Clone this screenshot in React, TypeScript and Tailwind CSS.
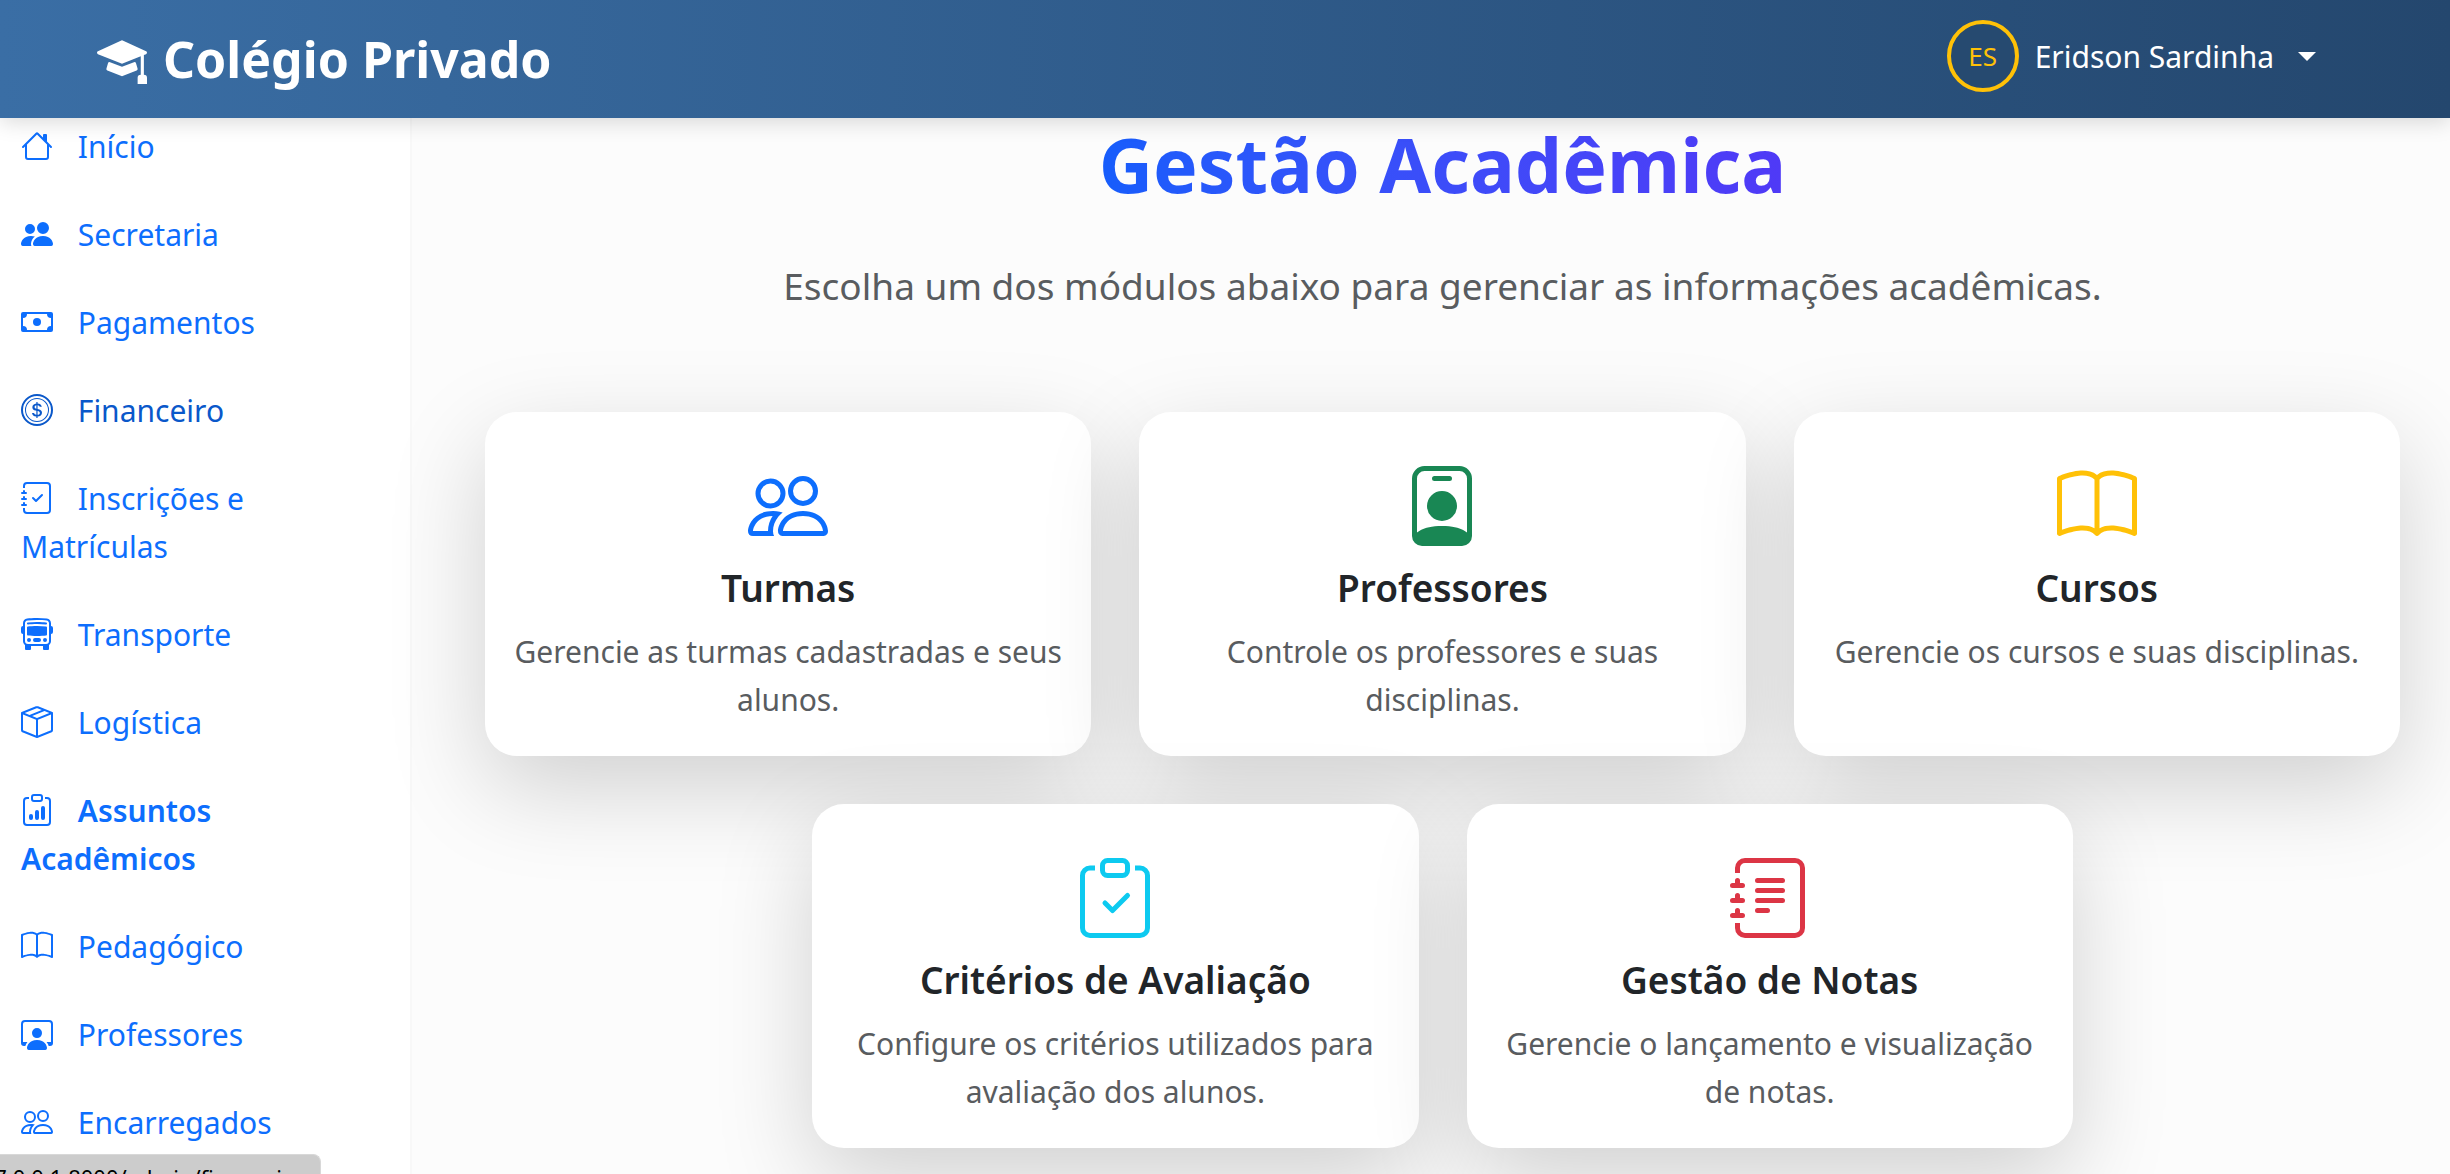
import React from "react";
import type { IconType } from "react-icons";
import {
  BsBook,
  BsBoxSeam,
  BsBusFront,
  BsCash,
  BsClipboardCheck,
  BsClipboardData,
  BsCoin,
  BsHouse,
  BsJournalCheck,
  BsJournalText,
  BsMortarboardFill,
  BsPeople,
  BsPeopleFill,
  BsPersonBadge,
  BsPersonWorkspace,
} from "react-icons/bs";

type MenuItem = { label: string; icon: IconType; className: string };
type Modulo = { title: string; text: string; icon: IconType; color: string };

const menu: MenuItem[] = [
  { label: "Início", icon: BsHouse, className: "text-[#0d6efd]" },
  { label: "Secretaria", icon: BsPeopleFill, className: "text-[#0d6efd]" },
  { label: "Pagamentos", icon: BsCash, className: "text-[#0d6efd]" },
  { label: "Financeiro", icon: BsCoin, className: "text-[#0a58ca]" },
  { label: "Inscrições e Matrículas", icon: BsJournalCheck, className: "text-[#0d6efd]" },
  { label: "Transporte", icon: BsBusFront, className: "text-[#0d6efd]" },
  { label: "Logística", icon: BsBoxSeam, className: "text-[#0d6efd]" },
  { label: "Assuntos Acadêmicos", icon: BsClipboardData, className: "text-[#0d6efd] font-semibold" },
  { label: "Pedagógico", icon: BsBook, className: "text-[#0d6efd]" },
  { label: "Professores", icon: BsPersonWorkspace, className: "text-[#0d6efd]" },
  { label: "Encarregados", icon: BsPeople, className: "text-[#0d6efd]" },
];

const modulos: Modulo[] = [
  { title: "Turmas", text: "Gerencie as turmas cadastradas e seus alunos.", icon: BsPeople, color: "text-[#0d6efd]" },
  { title: "Professores", text: "Controle os professores e suas disciplinas.", icon: BsPersonBadge, color: "text-[#198754]" },
  { title: "Cursos", text: "Gerencie os cursos e suas disciplinas.", icon: BsBook, color: "text-[#ffc107]" },
  {
    title: "Critérios de Avaliação",
    text: "Configure os critérios utilizados para avaliação dos alunos.",
    icon: BsClipboardCheck,
    color: "text-[#0dcaf0]",
  },
  {
    title: "Gestão de Notas",
    text: "Gerencie o lançamento e visualização de notas.",
    icon: BsJournalText,
    color: "text-[#dc3545]",
  },
];

function Header() {
  return (
    <header className="relative z-10 flex h-[118px] items-center justify-between bg-[linear-gradient(90deg,#3a6ea5,#24476e)] pr-[134px] pl-[97px] shadow-[0_4px_20px_rgba(0,0,0,0.15)]">
      <a href="#" className="flex items-center gap-4 text-[50px] font-bold text-white">
        <BsMortarboardFill className="size-[50px]" />
        Colégio Privado
      </a>
      <button type="button" className="flex items-center pb-1.5 text-[30px] text-white">
        <span className="mr-4 flex size-[72px] items-center justify-center rounded-full border-4 border-[#ffc107] bg-[#264a70] text-[26px] text-[#ffc107]">
          ES
        </span>
        Eridson Sardinha
        <span className="ml-6 border-x-[9px] border-t-[9px] border-x-transparent border-t-white" />
      </button>
    </header>
  );
}

function Sidebar() {
  return (
    <aside className="w-[412px] shrink-0 border-r-2 border-[#f8f8f8] bg-white">
      <nav className="pt-[5px] pr-[108px] pl-[21px]">
        <ul className="flex flex-col gap-10">
          {menu.map(({ label, icon: Icon, className }) => (
            <li key={label} className="text-[30px] leading-[48px]">
              <a href="#" className={className}>
                <Icon className="mr-[17px] inline size-8 align-[-4px]" /> {label}
              </a>
            </li>
          ))}
        </ul>
      </nav>
    </aside>
  );
}

function ModuloCard({ title, text, icon: Icon, color }: Modulo) {
  return (
    <a
      href="#"
      className="w-[calc((100%-96px)/3)] rounded-[32px] bg-white px-6 py-8 text-center shadow-[0_32px_96px_rgba(0,0,0,0.175)]"
    >
      <div className="flex h-[120px] justify-center pt-[22px]">
        <Icon className={`size-20 ${color}`} />
      </div>
      <h2 className="mb-4 text-[37px] leading-[48px] font-semibold text-[#212529]">{title}</h2>
      <p className="text-[30px] leading-[48px] text-[#595c5f]">{text}</p>
    </a>
  );
}

export default function App() {
  return (
    <div className="flex h-screen flex-col overflow-hidden bg-[#fcfcfc] font-['Noto_Sans',sans-serif]">
      <Header />

      <div className="flex flex-1">
        <Sidebar />

        <main className="flex-1 pr-[50px] pl-[73px]">
          <h1 className="mx-auto w-fit bg-linear-to-r from-blue-600 to-indigo-600 bg-clip-text text-[75px] leading-[92px] font-bold text-transparent">
            Gestão Acadêmica
          </h1>
          <p className="mt-[46px] text-center text-[37px] leading-[60px] text-[#595c5f]">
            Escolha um dos módulos abaixo para gerenciar as informações acadêmicas.
          </p>

          <div className="mt-24 flex flex-wrap justify-center gap-12">
            {modulos.map((modulo) => (
              <ModuloCard key={modulo.title} {...modulo} />
            ))}
          </div>
        </main>
      </div>

      {/* Link preview bubble */}
      <div className="fixed bottom-0 left-0 z-20 flex h-5 w-[321px] justify-end overflow-hidden rounded-tr-lg border-t border-r border-[#d8d8d8] bg-[#cccccc] pt-1.5 pr-4 text-[22px] whitespace-nowrap text-black">
        127.0.0.1:8000/admin/financeiro
      </div>
    </div>
  );
}
